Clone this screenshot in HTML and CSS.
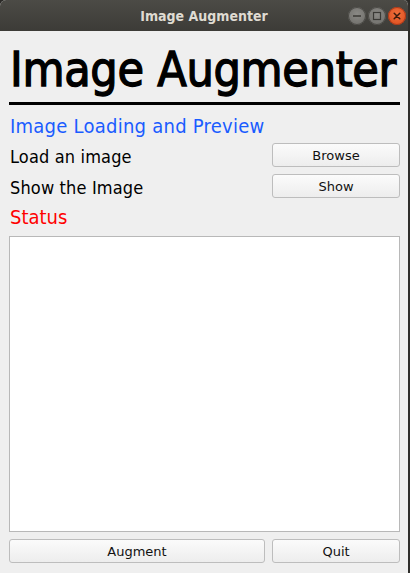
FILE: index.html
```html
<!DOCTYPE html>
<html>
<head>
<meta charset="utf-8">
<link rel="stylesheet" href="styles.css">
</head>
<body>
<div class="window">
  <header class="titlebar">
    <span class="spacer"></span>
    <span class="title">Image Augmenter</span>
    <div class="controls">
      <span class="ctl ctl-min"><svg width="18" height="18" viewBox="0 0 18 18"><line x1="5" y1="9" x2="13" y2="9" stroke="#3a3935" stroke-width="1.4"/></svg></span>
      <span class="ctl ctl-max"><svg width="18" height="18" viewBox="0 0 18 18"><rect x="5.5" y="5.5" width="7" height="7" fill="none" stroke="#3a3935" stroke-width="1.2"/></svg></span>
      <span class="ctl ctl-close"><svg width="18" height="18" viewBox="0 0 18 18"><path d="M6.2 6.2 L11.8 11.8 M11.8 6.2 L6.2 11.8" stroke="#3a1a0c" stroke-width="1.5" stroke-linecap="round"/></svg></span>
    </div>
  </header>
  <main class="content">
    <h1 class="heading">Image Augmenter</h1>
    <div class="rule"></div>
    <h2 class="section">Image Loading and Preview</h2>
    <div class="row first">
      <span class="label">Load an image</span>
      <button class="btn side">Browse</button>
    </div>
    <div class="row">
      <span class="label">Show the Image</span>
      <button class="btn side">Show</button>
    </div>
    <h2 class="status">Status</h2>
    <div class="log"></div>
    <div class="footer">
      <button class="btn wide">Augment</button>
      <button class="btn side">Quit</button>
    </div>
  </main>
</div>
</body>
</html>
```
FILE: styles.css
```css
html, body {
  margin: 0;
  padding: 0;
  background: #2b2a27;
}
.window {
  width: 410px;
  height: 573px;
  background: #efefef;
  border-radius: 6px 6px 0 0;
  overflow: hidden;
  display: flex;
  flex-direction: column;
  box-sizing: border-box;
  border-right: 2px solid #2f2e2b;
  font-family: "DejaVu Sans Condensed", "DejaVu Sans", sans-serif;
  font-stretch: condensed;
}
.titlebar {
  height: 31px;
  flex: none;
  background: linear-gradient(#4c4b46, #3c3b37);
  display: grid;
  grid-template-columns: 1fr auto 1fr;
  align-items: center;
}
.title {
  color: #dfdbd2;
  font-weight: bold;
  font-size: 14px;
  padding-top: 1px;
  white-space: nowrap;
}
.controls {
  display: flex;
  justify-content: flex-end;
  gap: 2px;
  padding-right: 2px;
  padding-top: 1px;
}
.ctl {
  width: 18px;
  height: 18px;
  border-radius: 50%;
  display: block;
  box-sizing: border-box;
}
.ctl svg { display: block; }
.ctl-min, .ctl-max {
  background: radial-gradient(circle at 50% 40%, #8a8985, #6b6a66);
  box-shadow: inset 0 0 0 1px #4a4945;
}
.ctl-close {
  background: radial-gradient(circle at 50% 40%, #f0703c, #d9481a);
  box-shadow: inset 0 0 0 1px #a8391a;
}
.content {
  flex: 1;
  min-height: 0;
  display: flex;
  flex-direction: column;
  padding: 10px 8px 0 9px;
}
.heading {
  margin: 0;
  font-size: 48px;
  line-height: 56px;
  font-weight: normal;
  color: #000;
  padding-left: 1px;
  white-space: nowrap;
  letter-spacing: -0.3px;
  -webkit-text-stroke: 1.3px #000;
}
.rule {
  height: 3px;
  background: #000;
  margin-top: 5px;
  flex: none;
}
.section {
  margin: 9px 0 0;
  font-size: 20px;
  line-height: 24px;
  font-weight: normal;
  color: #1a5cff;
  padding-left: 1px;
  white-space: nowrap;
  letter-spacing: 0.25px;
}
.row {
  display: flex;
  justify-content: space-between;
  align-items: center;
  height: 24px;
  margin-top: 7px;
  flex: none;
}
.row.first { margin-top: 5px; }
.label {
  font-size: 18px;
  color: #000;
  padding-left: 1px;
  padding-top: 3px;
  white-space: nowrap;
  letter-spacing: 0.15px;
}
.btn {
  font-family: "DejaVu Sans", sans-serif;
  font-size: 13px;
  color: #111;
  height: 24px;
  box-sizing: border-box;
  border: 1px solid #bdbdbd;
  border-radius: 3px;
  background: linear-gradient(#fbfbfb, #ededed);
  padding: 0;
  margin: 0;
}
.btn.side { width: 128px; }
.btn.wide { width: 256px; }
.status {
  margin: 7px 0 0;
  font-size: 20px;
  line-height: 24px;
  font-weight: normal;
  color: #ff0000;
  padding-left: 1px;
}
.log {
  margin-top: 7px;
  height: 296px;
  flex: none;
  box-sizing: border-box;
  background: #fff;
  border: 1px solid #b8b8b8;
}
.footer {
  display: flex;
  gap: 7px;
  margin-top: 7px;
  flex: none;
}
```
